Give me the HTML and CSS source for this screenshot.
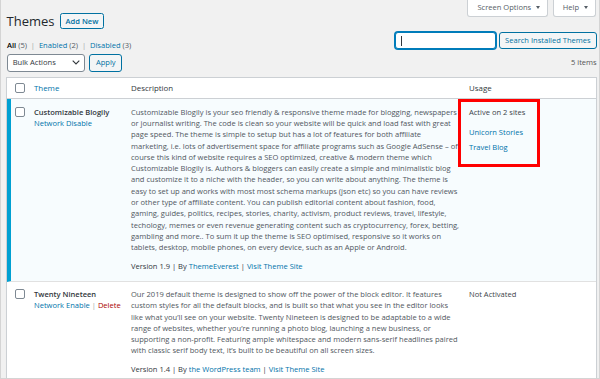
FILE: index.html
```html
<!DOCTYPE html>
<html lang="en">
<head>
<meta charset="utf-8">
<title>Themes</title>
<link rel="stylesheet" href="styles.css">
</head>
<body>
<div class="frame">
  <div class="wrap">
    <div class="header">
      <div class="title-row">
        <h1>Themes</h1>
        <a class="btn page-title-action" href="#">Add New</a>
      </div>
      <div class="tabs">
        <div class="tab">Screen Options <span class="tri"></span></div>
        <div class="tab">Help <span class="tri"></span></div>
      </div>
    </div>

    <div class="filters">
      <ul class="subsubsub">
        <li><span class="current">All</span> <span class="count">(5)</span></li>
        <li class="sep">|</li>
        <li><a href="#">Enabled</a> <span class="count">(2)</span></li>
        <li class="sep">|</li>
        <li><a href="#">Disabled</a> <span class="count">(3)</span></li>
      </ul>
      <div class="search-box">
        <div class="search-input"><span class="text-caret"></span></div>
        <span class="btn search-btn">Search Installed Themes</span>
      </div>
    </div>

    <div class="tablenav">
      <div class="bulk">
        <div class="select">Bulk Actions
          <svg class="chev" width="8" height="5" viewBox="0 0 8 5"><polyline points="0.7,0.7 4,4 7.3,0.7" fill="none" stroke="#32373c" stroke-width="1.1"/></svg>
        </div>
        <span class="btn apply">Apply</span>
      </div>
      <div class="displaying-num">5 items</div>
    </div>

    <table class="plugins">
      <thead>
        <tr>
          <th class="check-column"><span class="cb"></span></th>
          <th class="col-name"><a href="#">Theme</a></th>
          <th class="col-desc">Description</th>
          <th class="col-usage">Usage</th>
        </tr>
      </thead>
      <tbody>
        <tr class="active">
          <th class="check-column"><span class="cb"></span></th>
          <td class="plugin-title">
            <strong>Customizable Blogily</strong>
            <div class="row-actions"><a href="#">Network Disable</a></div>
          </td>
          <td class="desc">
            <p>Customizable Blogily is your seo friendly &amp; responsive theme made for blogging, newspapers<br>
            or journalist writing. The code is clean so your website will be quick and load fast with great<br>
            page speed. The theme is simple to setup but has a lot of features for both affiliate<br>
            marketing, i.e. lots of advertisement space for affiliate programs such as Google AdSense – of<br>
            course this kind of website requires a SEO optimized, creative &amp; modern theme which<br>
            Customizable Blogily is. Authors &amp; bloggers can easily create a simple and minimalistic blog<br>
            and customize it to a niche with the header, so you can write about anything. The theme is<br>
            easy to set up and works with most most schema markups (json etc) so you can have reviews<br>
            or other type of affiliate content. You can publish editorial content about fashion, food,<br>
            gaming, guides, politics, recipes, stories, charity, activism, product reviews, travel, lifestyle,<br>
            techology, memes or even revenue generating content such as cryptocurrency, forex, betting,<br>
            gambling and more.. To sum it up the theme is SEO optimised, responsive so it works on<br>
            tablets, desktop, mobile phones, on every device, such as an Apple or Android.</p>
            <div class="version">Version 1.9 | By <a href="#">ThemeEverest</a> | <a href="#">Visit Theme Site</a></div>
          </td>
          <td class="usage">
            <div class="usage-inner">
              <div class="usage-count">Active on 2 sites</div>
              <ul class="sites">
                <li><a href="#">Unicorn Stories</a></li>
                <li><a href="#">Travel Blog</a></li>
              </ul>
              <div class="highlight"></div>
            </div>
          </td>
        </tr>
        <tr class="inactive">
          <th class="check-column"><span class="cb"></span></th>
          <td class="plugin-title">
            <strong>Twenty Nineteen</strong>
            <div class="row-actions"><a href="#">Network Enable</a> <span class="pipe">|</span> <a class="delete" href="#">Delete</a></div>
          </td>
          <td class="desc">
            <p>Our 2019 default theme is designed to show off the power of the block editor. It features<br>
            custom styles for all the default blocks, and is built so that what you see in the editor looks<br>
            like what you’ll see on your website. Twenty Nineteen is designed to be adaptable to a wide<br>
            range of websites, whether you’re running a photo blog, launching a new business, or<br>
            supporting a non-profit. Featuring ample whitespace and modern sans-serif headlines paired<br>
            with classic serif body text, it’s built to be beautiful on all screen sizes.</p>
            <div class="version">Version 1.4 | By <a href="#">the WordPress team</a> | <a href="#">Visit Theme Site</a></div>
          </td>
          <td class="usage">
            <div class="usage-inner">
              <div class="usage-count">Not Activated</div>
            </div>
          </td>
        </tr>
      </tbody>
    </table>
  </div>
</div>
</body>
</html>
```

FILE: styles.css
```css
* { box-sizing: border-box; }

html, body {
  margin: 0;
  padding: 0;
  background: #f1f1f1;
}

.frame {
  width: 600px;
  height: 379px;
  overflow: hidden;
  background: #f1f1f1;
  border: 1px solid #d4d4d4;
  border-top: 0;
  font-family: "Open Sans", "Noto Sans", sans-serif;
  font-size: 7.55px;
  line-height: 11.27px;
  color: #444;
}

a { color: #0073aa; text-decoration: none; }

.wrap {
  padding: 0 2px 0 5px;
}

/* header */
.header {
  display: flex;
  justify-content: space-between;
  align-items: flex-start;
  height: 29px;
}

.title-row {
  display: flex;
  align-items: center;
  gap: 5.5px;
  padding-top: 13.3px;
  padding-left: 0.5px;
}

h1 {
  margin: 0;
  font-size: 13px;
  line-height: 16px;
  font-weight: 400;
  color: #23282d;
}

.btn {
  display: inline-flex;
  align-items: center;
  justify-content: center;
  border: 1px solid #0071a1;
  border-radius: 2.5px;
  background: #f3f5f6;
  color: #0071a1;
  white-space: nowrap;
}

.page-title-action {
  height: 16px;
  padding: 0 4.6px;
  font-weight: 600;
}

.tabs {
  display: flex;
  gap: 4.7px;
  margin-right: 1px;
}

.tab {
  display: flex;
  align-items: center;
  gap: 5px;
  height: 16.7px;
  padding: 0 6.9px 0 9px;
  background: #fff;
  border: 1px solid #ccd0d4;
  border-top: 0;
  border-radius: 0 0 3px 3px;
  color: #555d66;
}

.tri {
  width: 0;
  height: 0;
  border-left: 2.5px solid transparent;
  border-right: 2.5px solid transparent;
  border-top: 3px solid #555d66;
}

/* filters */
.filters {
  display: flex;
  justify-content: space-between;
  align-items: flex-end;
}

.subsubsub {
  list-style: none;
  margin: 0 0 -2px 1px;
  padding: 0;
  display: flex;
  gap: 2.4px;
  color: #555d66;
  white-space: nowrap;
}

.subsubsub .current { color: #000; font-weight: 600; }
.subsubsub .count { color: #555d66; }
.subsubsub .sep { color: #a0a5aa; padding: 0 1.5px; }

.search-box {
  display: flex;
  align-items: center;
  gap: 3.3px;
  margin-top: 3px;
  margin-right: 0.3px;
}

.search-input {
  width: 100.4px;
  height: 17px;
  background: #fff;
  border: 1px solid #007cba;
  box-shadow: 0 0 0 1px #007cba;
  border-radius: 3px;
  padding: 3px 0 0 4.3px;
}

.text-caret {
  display: block;
  width: 0.9px;
  height: 9.5px;
  background: #32373c;
}

.search-btn {
  width: 97.7px;
  height: 17px;
  border-radius: 3px;
}

/* tablenav */
.tablenav {
  display: flex;
  justify-content: space-between;
  align-items: center;
  margin-top: 5.3px;
  height: 17.4px;
}

.bulk {
  display: flex;
  gap: 4px;
  margin-left: 0.7px;
}

.select {
  display: flex;
  align-items: center;
  width: 78.6px;
  height: 17.4px;
  padding-left: 5px;
  background: #fff;
  border: 1px solid #7e8993;
  border-radius: 3px;
  color: #32373c;
}

.chev {
  margin-left: auto;
  margin-right: 3.8px;
}

.apply {
  width: 33px;
  height: 17.4px;
  border-radius: 3px;
}

.displaying-num {
  color: #555;
  margin-right: 0.3px;
}

/* table */
.plugins {
  width: 100%;
  margin-top: 5.6px;
  border: 1px solid #ccd0d4;
  border-spacing: 0;
  border-collapse: separate;
  table-layout: fixed;
  background: #fff;
  box-shadow: 0 1px 1px rgba(0,0,0,.04);
}

.plugins thead th {
  text-align: left;
  font-weight: 400;
  font-size: 7.9px;
  line-height: 11.27px;
  color: #32373c;
  padding: 5px 5.7px 3.73px;
  border-bottom: 1px solid #ccd0d4;
  vertical-align: top;
}

.plugins thead th.check-column { width: 21.3px; padding: 5px 0 0 8px; }
.plugins thead th.col-name { width: 97px; }
.plugins thead th.col-desc { width: 338px; }

.cb {
  display: block;
  width: 9.8px;
  height: 9.8px;
  background: #fff;
  border: 1px solid #7e8993;
  border-radius: 2px;
}

.plugins tbody td,
.plugins tbody th {
  vertical-align: top;
  text-align: left;
  padding: 7.6px 5.7px 8.65px;
}

.plugins tbody th.check-column {
  padding: 7.8px 0 0 8px;
}

.plugins tr.active td,
.plugins tr.active th {
  background: #f7fcfe;
  border-bottom: 1px solid #e1e1e1;
}

.plugins tr.active th.check-column {
  border-left: 4px solid #00a0d2;
  padding-left: 4px;
}

.plugin-title strong {
  display: block;
  font-weight: 600;
  color: #32373c;
  white-space: nowrap;
}

.row-actions { white-space: nowrap; }
.row-actions .pipe { color: #a0a5aa; }
.row-actions .delete { color: #a00; }

.desc p {
  margin: 0 0 7.3px;
  color: #50575e;
  white-space: nowrap;
}

.version {
  color: #32373c;
  white-space: nowrap;
}

.usage-inner {
  position: relative;
  color: #3c434a;
}

.sites {
  list-style: none;
  margin: 8.4px 0 0;
  padding: 0;
}

.sites li + li { margin-top: 3.9px; }

.highlight {
  position: absolute;
  top: -7.9px;
  left: -11px;
  width: 82px;
  height: 68px;
  border: 3.3px solid #f00;
}
```
